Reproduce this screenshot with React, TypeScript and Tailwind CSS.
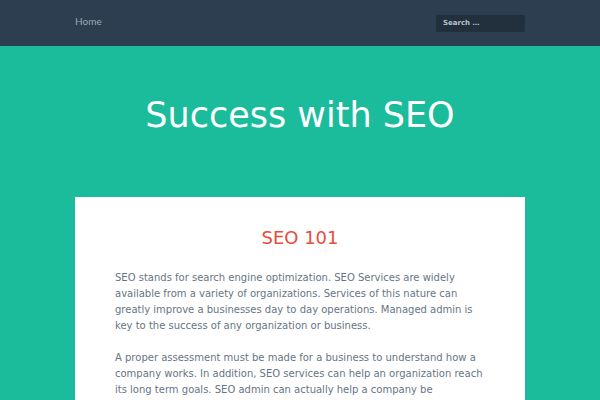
export default function App() {
  return (
    <div className="min-h-[400px] bg-[#1abc9c] font-['DejaVu_Sans',sans-serif]">
      <header className="h-[46px] bg-[#2c3e50]">
        <div className="mx-auto flex w-[450px] items-start justify-between pt-[15px]">
          <a className="font-['Lato',sans-serif] text-[10px] leading-[12px] text-[#9aa8b6]">Home</a>
          <div className="flex h-[17px] w-[89px] items-center rounded-[2px] bg-[#22303e] px-[7px]">
            <span className="text-[7px] font-bold text-[#b8c2cc]">Search …</span>
          </div>
        </div>
      </header>

      <div className="flex h-[151px] items-center justify-center pb-[12px]">
        <h1 className="text-[35px] leading-none text-white">Success with SEO</h1>
      </div>

      <main className="mx-auto w-[450px] bg-white px-[40px] pt-[29px] pb-[20px]">
        <h2 className="text-center text-[18px] leading-[24px] text-[#e74c3c]">SEO 101</h2>
        <div className="mt-[20px] space-y-[16px] text-[10px] leading-[16px] text-[#667585]">
          <p>
            SEO stands for search engine optimization. SEO Services are widely available from a variety of
            organizations. Services of this nature can greatly improve a businesses day to day operations.
            Managed admin is key to the success of any organization or business.
          </p>
          <p>
            A proper assessment must be made for a business to understand how a company works. In addition,
            SEO services can help an organization reach its long term goals. SEO admin can actually help a
            company be successful in many ways.
          </p>
        </div>
      </main>
    </div>
  );
}
